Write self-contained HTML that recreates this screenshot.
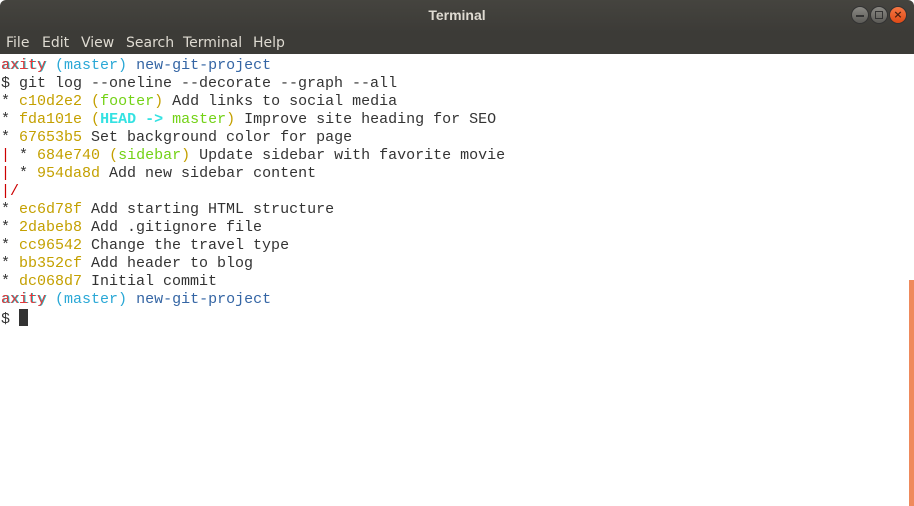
<!DOCTYPE html>
<html><head><meta charset="utf-8"><style>
*{margin:0;padding:0;box-sizing:border-box}
html,body{width:914px;height:506px;overflow:hidden;background:#fff}
.title{position:absolute;left:0;top:0;width:914px;height:32px;background:linear-gradient(#45443f,#3c3b37);border-radius:6px 6px 0 0;color:#dfdbd2;font:bold 14px "Liberation Sans",sans-serif;text-align:center;line-height:30px}
.menu{position:absolute;left:0;top:32px;width:914px;height:22px;background:#3c3b37;color:#dfdbd2;font:14px "DejaVu Sans","Liberation Sans",sans-serif;line-height:22px}
.menu span{position:absolute;top:0}
.btn{position:absolute;top:6px;width:18px;height:18px;border-radius:50%;background:linear-gradient(#8a8984,#5c5b57);border:1px solid #333}
.term{position:absolute;left:1px;top:57px;font:15px/18px "Liberation Mono","DejaVu Sans Mono",monospace;color:#333;white-space:pre}
.y{color:#c4a000}.g{color:#73d216}.c{color:#34e2e2;font-weight:bold}.lc{color:#2aa8d6}.b{color:#3465a4}.r{color:#cc0000}.ax{color:#e03a3a;text-shadow:1px 0 #20c0d0}
.cur{display:inline-block;width:9px;height:17px;background:#333;vertical-align:-3px}
.sb{position:absolute;left:909px;top:280px;width:5px;height:226px;background:#ef8a5c}
</style></head><body>
<div class="title">Terminal</div>
<div class="btn" style="left:851px"><div style="position:absolute;left:4px;top:8px;width:8px;height:1.5px;background:#333"></div></div>
<div class="btn" style="left:870px"><div style="position:absolute;left:4px;top:4px;width:8px;height:8px;border:1.5px solid #333"></div></div>
<div class="btn" style="left:889px;background:linear-gradient(#f57744,#df4a16)"><div style="position:absolute;left:0;top:0;width:16px;height:16px;text-align:center;font:bold 11px/16px 'DejaVu Sans',sans-serif;color:#4a2010">×</div></div>
<div class="menu"><span style="left:6px">File</span><span style="left:42px">Edit</span><span style="left:81px">View</span><span style="left:126px">Search</span><span style="left:183px">Terminal</span><span style="left:253px">Help</span></div>
<div class="term"><span class="ax">axity</span> <span class="lc">(master)</span> <span class="b">new-git-project</span>
$ git log --oneline --decorate --graph --all
* <span class="y">c10d2e2</span> <span class="y">(</span><span class="g">footer</span><span class="y">)</span> Add links to social media
* <span class="y">fda101e</span> <span class="y">(</span><span class="c">HEAD -&gt; </span><span class="g">master</span><span class="y">)</span> Improve site heading for SEO
* <span class="y">67653b5</span> Set background color for page
<span class="r">|</span> * <span class="y">684e740</span> <span class="y">(</span><span class="g">sidebar</span><span class="y">)</span> Update sidebar with favorite movie
<span class="r">|</span> * <span class="y">954da8d</span> Add new sidebar content
<span class="r">|/</span>
* <span class="y">ec6d78f</span> Add starting HTML structure
* <span class="y">2dabeb8</span> Add .gitignore file
* <span class="y">cc96542</span> Change the travel type
* <span class="y">bb352cf</span> Add header to blog
* <span class="y">dc068d7</span> Initial commit
<span class="ax">axity</span> <span class="lc">(master)</span> <span class="b">new-git-project</span>
$ <span class="cur"></span></div>
<div class="sb"></div>
</body></html>
